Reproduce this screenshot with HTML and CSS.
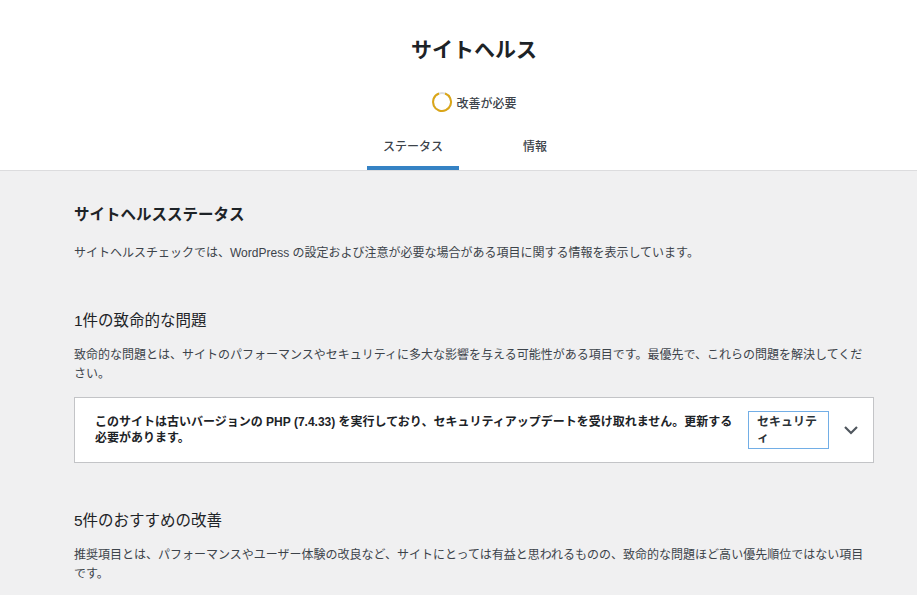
FILE: index.html
```html
<!DOCTYPE html>
<html lang="ja">
<head>
  <meta charset="UTF-8" />
  <meta name="viewport" content="width=device-width, initial-scale=1.0"/>
  <title>サイトヘルス</title>
  <link rel="stylesheet" href="styles.css">
</head>
<body>
  <div class="page">
    <div class="health-header">
      <h1 class="health-title">サイトヘルス</h1>
      <div class="health-status">
        <svg class="status-ring" width="22" height="22" viewBox="0 0 22 22">
          <circle cx="11" cy="11" r="9" fill="none" stroke="#dcdcde" stroke-width="2"/>
          <circle cx="11" cy="11" r="9" fill="none" stroke="#dba617" stroke-width="2"
                  stroke-dasharray="50 56.5" transform="rotate(-70 11 11)"/>
        </svg>
        <span>改善が必要</span>
      </div>
      <nav class="health-tabs">
        <a class="health-tab active" href="#">ステータス</a>
        <a class="health-tab" href="#">情報</a>
      </nav>
    </div>

    <div class="health-body">
      <h2>サイトヘルスステータス</h2>
      <p>サイトヘルスチェックでは、WordPress の設定および注意が必要な場合がある項目に関する情報を表示しています。</p>

      <h3>1件の致命的な問題</h3>
      <p>致命的な問題とは、サイトのパフォーマンスやセキュリティに多大な影響を与える可能性がある項目です。最優先で、これらの問題を解決してください。</p>

      <div class="accordion">
        <button class="accordion-trigger">
          <span class="accordion-title">このサイトは古いバージョンの PHP (7.4.33) を実行しており、セキュリティアップデートを受け取れません。更新する必要があります。</span>
          <span class="badge">セキュリティ</span>
          <span class="chevron">
            <svg width="16" height="10" viewBox="0 0 16 10">
              <polyline points="2,2 8,8 14,2" fill="none" stroke="#50575e" stroke-width="2.2"/>
            </svg>
          </span>
        </button>
      </div>

      <h3>5件のおすすめの改善</h3>
      <p>推奨項目とは、パフォーマンスやユーザー体験の改良など、サイトにとっては有益と思われるものの、致命的な問題ほど高い優先順位ではない項目です。</p>
    </div>
  </div>
</body>
</html>
```

FILE: styles.css
```css
html, body {
  margin: 0;
  padding: 0;
  overflow: hidden;
  background: #f0f0f1;
}
body {
  font-family: "Liberation Sans", "Noto Sans CJK JP", sans-serif;
  font-size: 12px;
  color: #3c434a;
}
.page {
  width: 948px;
}
.health-header {
  background: #fff;
  border-bottom: 1px solid #dcdcde;
  display: flex;
  flex-direction: column;
  align-items: center;
  padding-top: 36px;
}
.health-title {
  margin: 0;
  font-size: 21px;
  line-height: 28px;
  font-weight: 600;
  color: #1d2327;
}
.health-status {
  display: flex;
  align-items: center;
  gap: 3px;
  margin-top: 27px;
  font-weight: 500;
  color: #3c434a;
  height: 22px;
}
.status-ring {
  display: block;
}
.health-tabs {
  display: grid;
  grid-template-columns: 1fr 1fr;
  margin-top: 23px;
}
.health-tab {
  display: block;
  margin: 0 15px;
  padding: 2px 16px 10px;
  line-height: 18px;
  text-align: center;
  text-decoration: none;
  color: #3c434a;
  font-weight: 500;
  border-bottom: 4px solid transparent;
}
.health-tab.active {
  border-bottom-color: #3582c4;
}
.health-body {
  width: 800px;
  margin: 0 auto;
  padding-top: 33px;
}
.health-body h2 {
  margin: 0;
  font-size: 15.5px;
  line-height: 22px;
  font-weight: 600;
  color: #1d2327;
}
.health-body h3 {
  margin: 47px 0 0;
  font-size: 15.5px;
  line-height: 22px;
  font-weight: 400;
  color: #1d2327;
}
.health-body h2 + p {
  margin-top: 18px;
}
.health-body p {
  margin: 14px 0 0;
  line-height: 19px;
}
.accordion {
  margin-top: 13px;
  background: #fff;
  border: 1px solid #c3c4c7;
}
.accordion-trigger {
  display: flex;
  align-items: center;
  width: 100%;
  padding: 13px 0 13px 20px;
  border: none;
  background: transparent;
  font: inherit;
  text-align: left;
  color: #1d2327;
  cursor: pointer;
}
.accordion-title {
  flex: 1;
  padding-right: 10px;
  font-weight: 600;
  line-height: 16px;
}
.badge {
  box-sizing: border-box;
  width: 81px;
  margin-left: 2px;
  padding: 2px 7px 2px 8px;
  border: 1px solid #72aee6;
  line-height: 16px;
  font-weight: 600;
  color: #2c3338;
  line-break: loose;
}
.chevron {
  width: 44px;
  display: flex;
  justify-content: center;
}
.chevron svg {
  display: block;
}
```
